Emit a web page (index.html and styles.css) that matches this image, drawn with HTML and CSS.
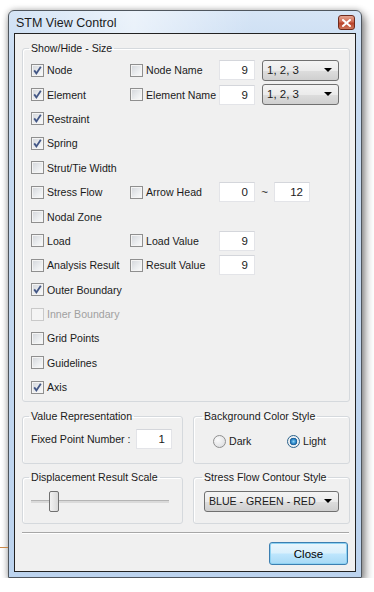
FILE: index.html
```html
<!DOCTYPE html>
<html lang="en">
<head>
    <meta charset="UTF-8">
    <meta name="viewport" content="width=device-width, initial-scale=1.0">
    <title>STM View Control</title>
    <link rel="stylesheet" href="styles.css">
</head>
<body>
    <div class="backdrop-line"></div>

    <div class="window">
        <!-- Title bar -->
        <div class="titlebar">
            <span class="title">STM View Control</span>
            <span class="btn-x">
                <svg width="9" height="8" viewBox="0 0 9 8"><path d="M1 1 L8 7 M8 1 L1 7" stroke="#fff" stroke-width="2" stroke-linecap="square"/></svg>
            </span>
        </div>

        <div class="client">
            <!-- Show/Hide - Size -->
            <fieldset class="group group-main">
                <legend>Show/Hide - Size</legend>

                <div class="row">
                    <label class="opt col1"><span class="cb on"></span>Node</label>
                    <label class="opt col2"><span class="cb"></span>Node Name</label>
                    <span class="num">9</span>
                    <span class="combo small">1, 2, 3<i class="arrow"></i></span>
                </div>
                <div class="row">
                    <label class="opt col1"><span class="cb on"></span>Element</label>
                    <label class="opt col2"><span class="cb"></span>Element Name</label>
                    <span class="num">9</span>
                    <span class="combo small">1, 2, 3<i class="arrow"></i></span>
                </div>
                <div class="row">
                    <label class="opt col1"><span class="cb on"></span>Restraint</label>
                </div>
                <div class="row">
                    <label class="opt col1"><span class="cb on"></span>Spring</label>
                </div>
                <div class="row">
                    <label class="opt col1"><span class="cb"></span>Strut/Tie Width</label>
                </div>
                <div class="row">
                    <label class="opt col1"><span class="cb"></span>Stress Flow</label>
                    <label class="opt col2"><span class="cb"></span>Arrow Head</label>
                    <span class="num">0</span>
                    <span class="tilde">~</span>
                    <span class="num">12</span>
                </div>
                <div class="row">
                    <label class="opt col1"><span class="cb"></span>Nodal Zone</label>
                </div>
                <div class="row">
                    <label class="opt col1"><span class="cb"></span>Load</label>
                    <label class="opt col2"><span class="cb"></span>Load Value</label>
                    <span class="num">9</span>
                </div>
                <div class="row">
                    <label class="opt col1"><span class="cb"></span>Analysis Result</label>
                    <label class="opt col2"><span class="cb"></span>Result Value</label>
                    <span class="num">9</span>
                </div>
                <div class="row">
                    <label class="opt col1"><span class="cb on"></span>Outer Boundary</label>
                </div>
                <div class="row">
                    <label class="opt col1 disabled"><span class="cb"></span>Inner Boundary</label>
                </div>
                <div class="row">
                    <label class="opt col1"><span class="cb"></span>Grid Points</label>
                </div>
                <div class="row">
                    <label class="opt col1"><span class="cb"></span>Guidelines</label>
                </div>
                <div class="row">
                    <label class="opt col1"><span class="cb on"></span>Axis</label>
                </div>
            </fieldset>

            <div class="pair">
                <fieldset class="group half-left">
                    <legend>Value Representation</legend>
                    <div class="line">
                        <span class="fixed-label">Fixed Point Number :</span>
                        <span class="num">1</span>
                    </div>
                </fieldset>
                <fieldset class="group half-right">
                    <legend>Background Color Style</legend>
                    <div class="line radios">
                        <label class="opt radio-dark"><span class="rb"></span>Dark</label>
                        <label class="opt"><span class="rb on"></span>Light</label>
                    </div>
                </fieldset>
            </div>

            <div class="pair pair-second">
                <fieldset class="group half-left">
                    <legend>Displacement Result Scale</legend>
                    <div class="slider">
                        <span class="track"></span>
                        <span class="thumb"></span>
                    </div>
                </fieldset>
                <fieldset class="group half-right">
                    <legend>Stress Flow Contour Style</legend>
                    <span class="combo wide">BLUE - GREEN - RED<i class="arrow"></i></span>
                </fieldset>
            </div>

            <div class="sep"></div>

            <div class="footer">
                <button class="close-btn">Close</button>
            </div>
        </div>
    </div>
</body>
</html>
```

FILE: styles.css
```css
body {
    margin: 0;
    background: #ffffff;
    font-family: "Liberation Sans", Arial, sans-serif;
    font-size: 10.6px;
    color: #1a1a1a;
}

.backdrop-line {
    position: absolute;
    left: 0;
    top: 547px;
    width: 8px;
    height: 1px;
    background: #c8894a;
}

.window {
    margin: 10px 0 0 8px;
    width: 354px;
    height: 568px;
    box-sizing: border-box;
    border: 1px solid #4f565e;
    border-radius: 6px 6px 0 0;
    background: linear-gradient(180deg, #d6e5f6 0%, #c9dcf2 8%, #bcd3ee 100%);
    box-shadow: 3px 5px 10px rgba(0, 0, 0, 0.45), 0 0 6px rgba(0, 0, 0, 0.25);
    padding: 0 5px 5px 5px;
    display: flex;
    flex-direction: column;
}

.titlebar {
    height: 22px;
    display: flex;
    align-items: flex-start;
    justify-content: space-between;
    background: linear-gradient(90deg, rgba(255,255,255,0) 0%, rgba(255,255,255,0.55) 35%, rgba(255,255,255,0) 70%);
}

.title {
    font-size: 12.5px;
    margin: 5px 0 0 2px;
    color: #1b1b1b;
}

.btn-x {
    margin: 4px 1px 0 0;
    width: 17px;
    height: 15px;
    box-sizing: border-box;
    border: 1px solid #6e2a1d;
    border-radius: 3px;
    background: linear-gradient(180deg, #e4a592 0%, #cf6a52 45%, #b9432b 55%, #d0785c 100%);
    display: flex;
    align-items: center;
    justify-content: center;
}

.client {
    flex: 1;
    background: #f0f0f0;
    border: 1px solid #222;
    padding: 8px 5px 0 7px;
    display: flex;
    flex-direction: column;
}

.group {
    margin: 0;
    border: 1px solid #d5d9dd;
    border-radius: 3px;
    min-width: 0;
    box-shadow: inset 1px 1px 0 #fff;
}

.group legend {
    padding: 0 2px;
    margin-left: -2px;
    line-height: 13px;
}

.group-main {
    padding: 3px 0 2px 8px;
}

.row {
    height: 24.4px;
    display: flex;
    align-items: center;
}

.opt {
    display: flex;
    align-items: center;
    gap: 3px;
    white-space: nowrap;
}

.col1 { width: 99px; }
.col2 { width: 89px; }

.disabled { color: #a0a0a0; }

.cb {
    width: 13px;
    height: 13px;
    box-sizing: border-box;
    border: 1px solid #8f8f8f;
    background: linear-gradient(135deg, #d2d5da 0%, #eceef0 60%, #fbfbfb 100%);
    box-shadow: inset 0 0 0 1px #f4f4f4;
    flex: none;
}

.cb.on {
    background-image: url("data:image/svg+xml,%3Csvg xmlns='http://www.w3.org/2000/svg' width='11' height='11'%3E%3Cpath d='M2.2 5.4 L4.4 8.4 L8.8 1.8' fill='none' stroke='%23435786' stroke-width='1.8'/%3E%3C/svg%3E"), linear-gradient(135deg, #d2d5da 0%, #eceef0 60%, #fbfbfb 100%);
    background-repeat: no-repeat;
    background-position: center;
}

.disabled .cb {
    border-color: #c9c9c9;
    background: #f4f4f4;
}

.num {
    width: 36px;
    height: 20px;
    box-sizing: border-box;
    background: #fff;
    border: 1px solid #e3e4e8;
    border-top-color: #d4d6db;
    text-align: right;
    padding-right: 6px;
    line-height: 18px;
    font-size: 11.5px;
}

.tilde {
    width: 19px;
    text-align: center;
    font-size: 11.5px;
}

.combo {
    position: relative;
    height: 21px;
    box-sizing: border-box;
    border: 1px solid #707070;
    border-radius: 3px;
    background: linear-gradient(180deg, #f4f4f4 0%, #ebebeb 50%, #dddddd 52%, #cfcfcf 100%);
    line-height: 19px;
    padding-left: 4px;
    font-size: 11.5px;
}

.combo.small {
    width: 77px;
    margin-left: 7px;
}

.combo.wide {
    display: block;
    width: 135px;
    font-size: 10.6px;
}

.arrow {
    position: absolute;
    right: 6px;
    top: 7px;
    border-left: 4px solid transparent;
    border-right: 4px solid transparent;
    border-top: 4px solid #000;
}

.pair {
    display: flex;
    gap: 10px;
    margin-top: 8px;
}

.pair-second {
    margin-top: 7px;
}

.half-left {
    width: 161px;
    box-sizing: border-box;
    padding: 6px 0 12px 8px;
}

.half-right {
    width: 157px;
    box-sizing: border-box;
    padding: 6px 0 12px 10px;
}

.pair-second .half-left,
.pair-second .half-right {
    padding-top: 7px;
    padding-bottom: 11px;
}

.line {
    display: flex;
    align-items: center;
    height: 20px;
}

.fixed-label {
    width: 105px;
}

.radios {
    padding-top: 2px;
    padding-left: 9px;
}

.radio-dark {
    width: 74px;
}

.rb {
    width: 13px;
    height: 13px;
    box-sizing: border-box;
    border-radius: 50%;
    border: 1px solid #8f8f8f;
    background: radial-gradient(circle at 35% 35%, #fbfbfb 0%, #e2e3e5 70%, #cfd1d4 100%);
    flex: none;
}

.rb.on {
    border-color: #2c628b;
    background: radial-gradient(circle at 50% 50%, #8fd4f8 0%, #2a86c7 30%, #1c5a92 45%, #e9eef2 52%, #f5f5f5 100%);
}

.slider {
    position: relative;
    width: 138px;
    height: 21px;
}

.track {
    position: absolute;
    left: 0;
    right: 0;
    top: 9px;
    height: 2px;
    background: #dadada;
    border-top: 1px solid #b4b4b4;
}

.thumb {
    position: absolute;
    left: 18px;
    top: 0;
    width: 10px;
    height: 21px;
    box-sizing: border-box;
    border: 1px solid #707070;
    border-radius: 2px;
    background: linear-gradient(90deg, #f2f2f2 0%, #e6e6e6 50%, #d8d8d8 100%);
}

.sep {
    margin-top: 8px;
    margin-right: 1px;
    height: 1px;
    background: #a7a7a7;
    border-bottom: 1px solid #fff;
}

.footer {
    display: flex;
    justify-content: flex-end;
    padding: 8px 2px 0 0;
}

.close-btn {
    width: 79px;
    height: 23px;
    border: 1px solid #3c7fb1;
    border-radius: 3px;
    background: linear-gradient(180deg, #eaf6fd 0%, #d9f0fc 48%, #bee6fd 52%, #a7d9f5 100%);
    box-shadow: inset 0 0 0 1px #8ed2f2;
    font-family: "Liberation Sans", Arial, sans-serif;
    font-size: 11.5px;
    color: #000;
    padding: 0;
}
```
